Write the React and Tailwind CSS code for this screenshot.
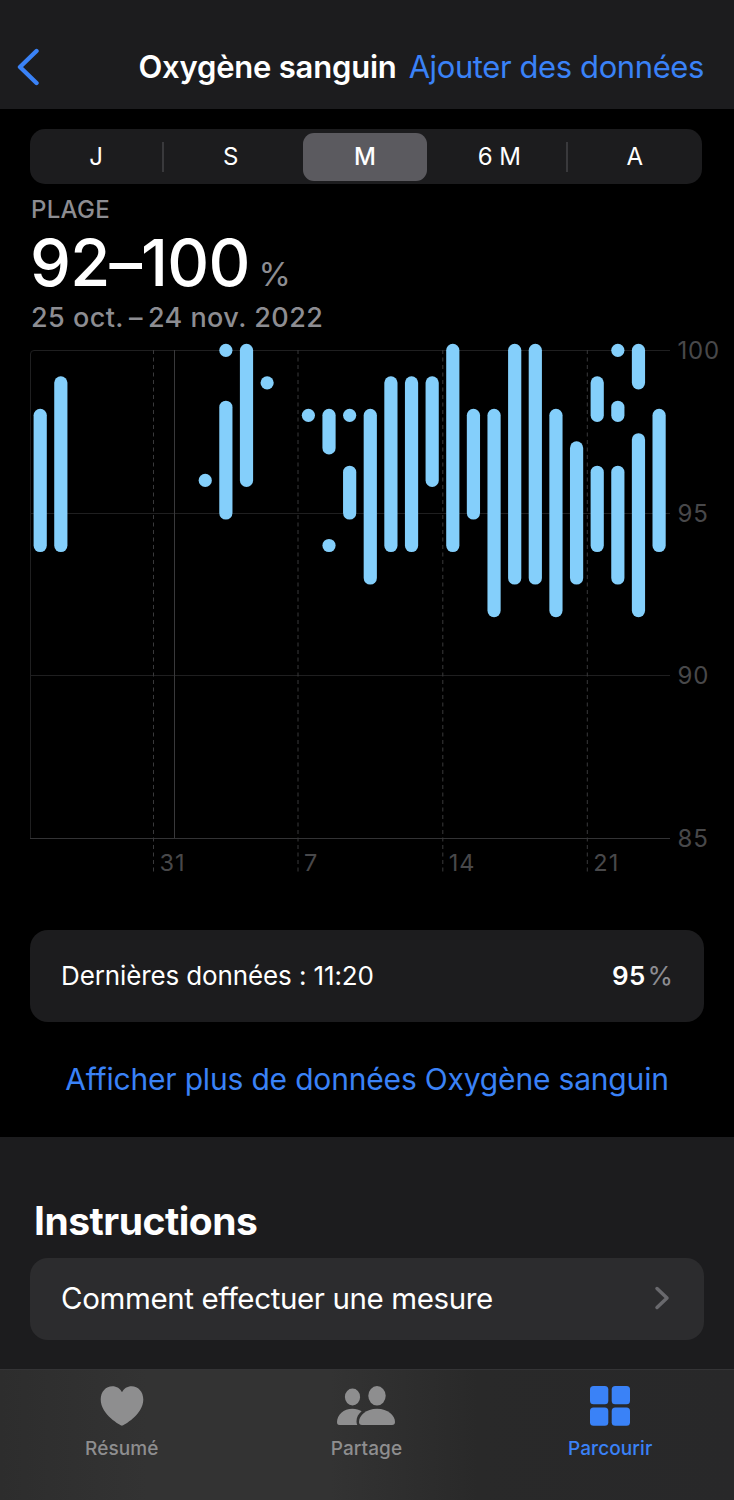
import React from 'react';

const periods = ['J', 'S', 'M', '6 M', 'A'];

const ranges = [
  [0, 94, 98],
  [1, 94, 99],
  [8, 96, 96],
  [9, 100, 100],
  [9, 95, 98.25],
  [10, 96, 100],
  [11, 99, 99],
  [13, 98, 98],
  [14, 97, 98],
  [14, 94, 94],
  [15, 98, 98],
  [15, 95, 96.25],
  [16, 93, 98],
  [17, 94, 99],
  [18, 94, 99],
  [19, 96, 99],
  [20, 94, 100],
  [21, 95, 98],
  [22, 92, 98],
  [23, 93, 100],
  [24, 93, 100],
  [25, 92, 98],
  [26, 93, 97],
  [27, 98, 99],
  [27, 94, 96.25],
  [28, 100, 100],
  [28, 98, 98.25],
  [28, 93, 96.25],
  [29, 99, 100],
  [29, 92, 97.25],
  [30, 94, 98],
];

const weeks = [
  { x: 153.5, label: '31' },
  { x: 298, label: '7' },
  { x: 442.8, label: '14' },
  { x: 587.3, label: '21' },
];

const dayX = (day) => 40.2 + day * 20.63;
const valueY = (value) => 10.3 + (100 - value) * 32.53;

const RangeChart = () => (
  <svg width="734" height="550" viewBox="0 0 734 550" className="block shrink-0 overflow-visible">
    {/* Grid */}
    <g fill="none" strokeWidth="1">
      <path d="M30.5 498V14a3.5 3.5 0 0 1 3.5 -3.5H670" stroke="#1f1f20" />
      <path d="M30 173.5H670M30 335.5H670" stroke="#1f1f20" />
      <path d="M30 498.5H670" stroke="#333335" />
      <path d="M174.5 10V498" stroke="#39393b" />
      {weeks.map((week) => (
        <path key={week.label} d={`M${week.x} 10V535`} stroke="#39393b" strokeDasharray="4 3.5" />
      ))}
    </g>

    {/* Daily ranges */}
    <g stroke="#84cffb" strokeWidth="13.2" strokeLinecap="round">
      {ranges.map(([day, low, high], index) => (
        <line
          key={index}
          x1={dayX(day)}
          x2={dayX(day)}
          y1={valueY(high)}
          y2={valueY(low) + 0.01}
        />
      ))}
    </g>

    {/* Axis labels */}
    <g fill="#48484a" className="text-[24px]">
      {[100, 95, 90, 85].map((value) => (
        <text key={value} x="677.5" y={valueY(value) + 8.7} className="tracking-[0.8px]">
          {value}
        </text>
      ))}
      {weeks.map((week) => (
        <text key={week.label} x={week.x + 6} y="531" className="text-[23.5px] tracking-[1px]">
          {week.label}
        </text>
      ))}
    </g>
  </svg>
);

const HeartIcon = () => (
  <svg width="44" height="40" viewBox="0 0 44 40" fill="currentColor">
    <path d="M22 39.7C20.8 39.7 0.7 28.5 0.7 13.5C0.7 5.5 6 0.2 12.3 0.2C16.8 0.2 20.2 2.5 22 6.2C23.8 2.5 27.2 0.2 31.7 0.2C38 0.2 43.3 5.5 43.3 13.5C43.3 28.5 23.2 39.7 22 39.7Z" />
  </svg>
);

const PeopleIcon = () => (
  <svg width="60" height="40" viewBox="0 0 60 40" fill="currentColor">
    <ellipse cx="16.5" cy="11" rx="7.6" ry="8.4" />
    <ellipse cx="41" cy="9.8" rx="8.7" ry="9.7" />
    <path d="M3.5 39C1.7 39 1 38 1 36C1 29 7.5 22.8 16.5 22.8C20 22.8 23.2 23.8 25.6 25.3C22.3 28 20.5 31.5 20.5 35.5C20.5 37 20.8 38.2 21.3 39Z" />
    <path d="M26 39C24 39 23 38 23 36C23 29.5 30 22.8 41 22.8C52 22.8 59 29.5 59 36C59 38 58 39 56 39Z" />
  </svg>
);

const GridIcon = () => (
  <svg width="40" height="40" viewBox="0 0 40 40" fill="currentColor">
    <rect x="0" y="0" width="18.3" height="18.3" rx="3.5" />
    <rect x="21.7" y="0" width="18.3" height="18.3" rx="3.5" />
    <rect x="0" y="21.5" width="18.3" height="18.3" rx="3.5" />
    <rect x="21.7" y="21.5" width="18.3" height="18.3" rx="3.5" />
  </svg>
);

const tabs = [
  { label: 'Résumé', icon: HeartIcon },
  { label: 'Partage', icon: PeopleIcon },
  { label: 'Parcourir', icon: GridIcon, active: true },
];

const App = () => {
  return (
    <div className="w-[734px] h-[1500px] flex flex-col overflow-hidden bg-black text-white font-['Inter',sans-serif] whitespace-nowrap">
      {/* Navigation bar */}
      <header className="h-[109px] shrink-0 bg-[#1c1c1e] pt-[25px] pl-[17px] pr-[30px] flex items-center">
        <svg width="22" height="38" viewBox="0 0 22 38" fill="none" className="text-[#3a82f7]">
          <path d="M19.5 3L3 19L19.5 35" stroke="currentColor" strokeWidth="4.4" strokeLinecap="round" strokeLinejoin="round" />
        </svg>
        <h1 className="ml-auto text-[31px] leading-[38px] font-semibold tracking-[-0.2px]">Oxygène sanguin</h1>
        <button className="ml-[12px] text-[31px] leading-[38px] text-[#3a82f7] tracking-[-0.4px]">Ajouter des données</button>
      </header>

      {/* Period selector */}
      <div className="mt-5 ml-[30px] w-[672px] h-[55px] shrink-0 rounded-[15px] bg-[#1c1c1e] grid grid-cols-5 items-center">
        {periods.map((period) => (
          <div
            key={period}
            className={
              period === 'M'
                ? 'ml-1 mr-[6px] h-12 rounded-[11px] bg-[#5b5a5f] flex items-center justify-center text-2xl font-medium'
                : `h-[30px] flex items-center justify-center text-2xl ${
                    period === 'S' ? 'pr-[2px]' : ''
                  } ${period === 'J' || period === '6 M' ? 'border-r-2 border-[#39393c]' : ''}`
            }
          >
            {period}
          </div>
        ))}
      </div>

      {/* Summary */}
      <div className="h-[156px] shrink-0 pl-[31px] pt-[11px] text-[#8d8d92]">
        <div className="text-2xl leading-[29px] font-medium tracking-[0.3px]">PLAGE</div>
        <div className="h-[77px] flex items-baseline">
          <span className="-ml-px text-[65px] leading-[77px] font-medium text-white tracking-[-0.8px]">92–100</span>
          <span className="ml-[9px] text-[33px]">%</span>
        </div>
        <div className="text-[27px] leading-[34px] font-medium tracking-[0.45px]">
          25 oct.<span className="mx-[5px]">–</span>24 nov. 2022
        </div>
      </div>

      <RangeChart />

      {/* Latest reading */}
      <div className="mt-10 mx-[30px] h-[92px] shrink-0 rounded-[18px] bg-[#1c1c1e] px-[31px] pb-[2px] flex items-center justify-between text-[26px]">
        <span className="tracking-[-0.12px]">Dernières données : 11:20</span>
        <span>
          <span className="font-semibold tracking-[0.2px]">95</span>
          <span className="ml-[2px] text-[#8d8d92]">%</span>
        </span>
      </div>
      <button className="h-[115px] shrink-0 text-center text-[30px] text-[#3a82f7] tracking-[-0.18px]">
        Afficher plus de données Oxygène sanguin
      </button>

      {/* Instructions */}
      <section className="h-[232px] shrink-0 bg-[#1c1c1e] px-[30px] pt-[60px]">
        <h2 className="pl-1 text-[39px] leading-[48px] font-bold tracking-[-0.5px]">Instructions</h2>
        <div className="mt-[13px] h-[82px] rounded-[18px] bg-[#2c2c2e] pl-[31px] pr-[34px] pb-[2px] flex items-center justify-between text-[29.5px] tracking-[-0.38px]">
          <span>Comment effectuer une mesure</span>
          <svg width="16" height="24" viewBox="0 0 16 24" fill="none">
            <path d="M3 2.5L13 12L3 21.5" stroke="#69696d" strokeWidth="3.5" strokeLinecap="round" strokeLinejoin="round" />
          </svg>
        </div>
      </section>

      {/* Tab bar */}
      <nav className="h-[131px] shrink-0 border-t border-[#343436] bg-[linear-gradient(90deg,#2d2d2d_0%,#333333_20%,#333333_45%,#292929_65%,#282829_100%)] grid grid-cols-3 pt-4">
        {tabs.map(({ label, icon: Icon, active }) => (
          <div
            key={label}
            className={`flex flex-col items-center ${active ? '-ml-[3px] text-[#3a82f7]' : '-ml-px text-[#8e8e8f]'}`}
          >
            <Icon />
            <span className="mt-[10px] text-[19px] leading-[26px] font-medium tracking-[0.1px]">{label}</span>
          </div>
        ))}
      </nav>
    </div>
  );
};

export default App;
